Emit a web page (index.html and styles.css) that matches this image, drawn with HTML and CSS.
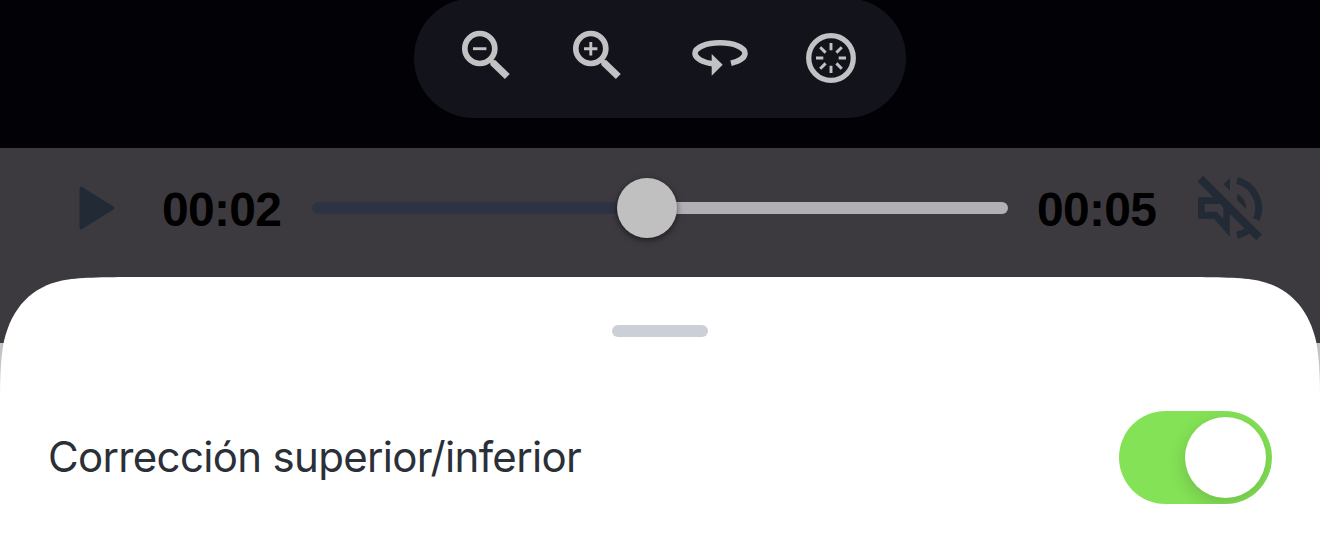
FILE: index.html
```html
<!DOCTYPE html>
<html lang="es">
<head>
    <meta charset="UTF-8">
    <meta name="viewport" content="width=device-width, initial-scale=1.0">
    <title>Reproductor</title>
    <link rel="stylesheet" href="styles.css">
</head>
<body>
    <div class="screen">
        <div class="stage">
            <div class="toolbar">
                <svg class="icon" width="60" height="60" viewBox="0 0 60 60">
                    <circle cx="23.8" cy="20.5" r="15" stroke-width="5.7"/>
                    <path d="M17 20.7h13.4" stroke-width="2.9"/>
                    <path d="M34 31.8L38 35.8" stroke-width="5"/>
                    <path d="M36.5 34.300L51.300 48.600" stroke-width="7"/>
                </svg>
                <svg class="icon" width="60" height="60" viewBox="0 0 60 60">
                    <circle cx="23.8" cy="20.5" r="15" stroke-width="5.7"/>
                    <path d="M17 20.7h13.4M23.8 14v13.4" stroke-width="2.9"/>
                    <path d="M34 31.8L38 35.8" stroke-width="5"/>
                    <path d="M36.5 34.300L51.300 48.600" stroke-width="7"/>
                </svg>
                <svg class="icon rotate" width="60" height="60" viewBox="0 0 60 60">
                    <path d="M41 35.2C48.5 33.4 55 29.8 55 25.3C55 19.5 43.9 14.8 30 14.8S5 19.5 5 25.3C5 30.3 12.5 34.4 22.5 35.7" stroke-width="5.6"/>
                    <path class="fill" d="M21.7 26L32.7 36.7L21.7 47.7z"/>
                </svg>
                <svg class="icon" width="60" height="60" viewBox="0 0 60 60">
                    <circle cx="30" cy="30" r="22.3" stroke-width="5.3"/>
                    <path d="M30 15v7.3M30 37.7V45M15 30h7.3M37.7 30H45M19.2 19.2l5.4 5.4M35.4 35.4l5.4 5.4M19.2 40.8l5.4-5.4M35.4 24.6l5.4-5.4" stroke-width="2.9"/>
                </svg>
            </div>
        </div>

        <div class="player">
            <svg class="play" width="40" height="50" viewBox="0 0 40 50">
                <path d="M3 5L35 25L3 45z"/>
            </svg>
            <span class="time">00:02</span>
            <div class="track">
                <div class="knob"></div>
            </div>
            <span class="time">00:05</span>
            <svg class="mute" width="70" height="70" viewBox="0 0 70 70">
                <path d="M5.3 5.7L64 64.3" stroke-width="8"/>
                <path class="fill" d="M3 24.3H22L34.7 36V63.5L19 45.7H3zM9.7 31V38.7H21.7L28.3 45.7V31L26.5 29L23.5 31z"/>
                <path class="fill" d="M28.5 11.3L35 5V17.8z"/>
                <path d="M42 7.3A28.7 28.7 0 0 1 61.3 46.5M42 62.3Q48.5 61 54 57" stroke-width="7"/>
                <path class="fill" d="M42 21C48 24 51 28.5 51.3 36L42 27z"/>
            </svg>
        </div>

        <div class="sheet">
            <div class="handle"></div>
            <div class="option">
                <span class="label">Corrección superior/inferior</span>
                <div class="switch"><div class="thumb"></div></div>
            </div>
        </div>
    </div>
</body>
</html>
```
FILE: styles.css
```css
body {
    margin: 0;
    background: #c3c2c7;
}
.screen {
    width: 1320px;
    height: 550px;
    overflow: hidden;
}
.stage {
    height: 148px;
    background: #020105;
    display: flex;
    justify-content: center;
    align-items: flex-start;
}
.toolbar {
    box-sizing: border-box;
    width: 492px;
    height: 120px;
    margin-top: -2px;
    padding: 30px 0 0 42px;
    border-radius: 60px;
    background: #13131b;
    display: flex;
    gap: 51px;
}
.icon {
    flex: none;
    fill: none;
    stroke: #c2c2c4;
}
.icon .fill {
    fill: #c2c2c4;
    stroke: none;
}
.icon.rotate {
    margin-left: 12px;
}
.player {
    box-sizing: border-box;
    height: 195px;
    padding: 25px 55px 0 78px;
    background: #3d3a3f;
    display: flex;
    align-items: flex-start;
}
.player svg, .player .time, .player .track {
    flex: none;
}
.play {
    margin-top: 10px;
    fill: #222a36;
    stroke: #222a36;
    stroke-width: 3;
    stroke-linejoin: round;
}
.time {
    width: 120px;
    margin: 2px 0 0 44px;
    font: bold 48px/70px "Liberation Sans", Arial, sans-serif;
    letter-spacing: -0.7px;
    color: #000;
}
.track {
    width: 696px;
    height: 12px;
    margin: 29px -15px 0 30px;
    border-radius: 6px;
    background: linear-gradient(to right, #2d3342 335px, #b1b0b7 335px);
    display: flex;
    align-items: center;
}
.knob {
    flex: none;
    width: 60px;
    height: 60px;
    margin-left: 305px;
    border-radius: 50%;
    background: #c0c0c0;
    box-shadow: 0 2px 6px rgba(0, 0, 0, 0.55);
}
.mute {
    margin-left: 38px;
    fill: none;
    stroke: #222a36;
}
.mute .fill {
    fill: #222a36;
    fill-rule: evenodd;
    stroke: none;
}
.sheet {
    position: relative;
    height: 273px;
    margin-top: -66px;
    background: #fff;
    /* corners are smoother than a plain border-radius */
    clip-path: path("M0 125C0 95 1 80 4 64C12 30 32 10 62 3.5C78 .5 100 0 140 0H1180C1220 0 1242 .5 1258 3.5C1288 10 1308 30 1316 64C1319 80 1320 95 1320 125V273H0z");
    display: flex;
    flex-direction: column;
    align-items: center;
}
.handle {
    width: 96px;
    height: 12px;
    margin-top: 48px;
    border-radius: 6px;
    background: #cbcfd8;
}
.option {
    box-sizing: border-box;
    width: 100%;
    margin-top: 74px;
    padding: 0 48px;
    display: flex;
    align-items: center;
    justify-content: space-between;
}
.label {
    margin-bottom: 1px;
    font: 42px/50px Inter, sans-serif;
    letter-spacing: -0.67px;
    color: #2b2f38;
}
.switch {
    box-sizing: border-box;
    width: 153px;
    height: 93px;
    padding: 6px;
    border-radius: 47px;
    background: #84e256;
    overflow: hidden;
    display: flex;
    justify-content: flex-end;
}
.thumb {
    width: 81px;
    height: 81px;
    border-radius: 50%;
    background: #fff;
    box-shadow: 0 6px 18px rgba(0, 0, 0, 0.16);
}
```
